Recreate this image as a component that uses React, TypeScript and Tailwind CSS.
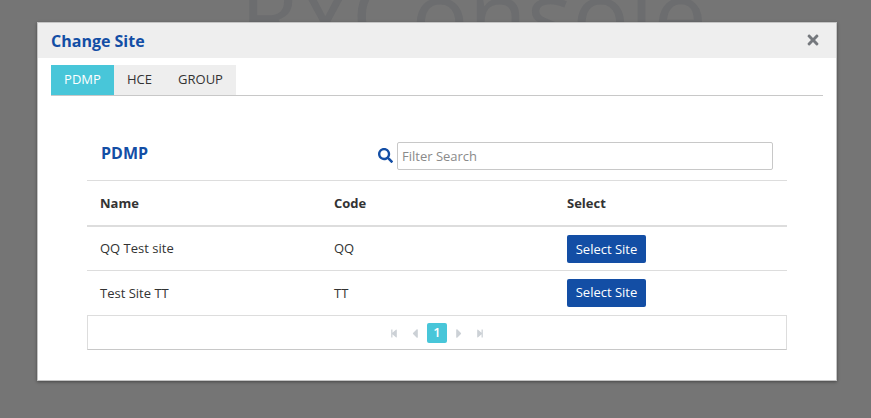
import { FaSearch, FaTimes, FaStepBackward, FaStepForward, FaCaretLeft, FaCaretRight } from "react-icons/fa"

const sites = [
    { name: "QQ Test site", code: "QQ" },
    { name: "Test Site TT", code: "TT" },
]

const SiteRow = (props: { name: string, code: string }) => {
    return (
        <tr className="h-[44px] border-b border-[#dddddd] last:h-[45px] last:border-b-0 [&:last-child>td]:pt-[2px] [&>td:last-child]:pt-[2px] [&:last-child>td:last-child]:pt-0">
            <td className="w-[234px] pl-[13px]">{props.name}</td>
            <td className="w-[233px] pl-[13px]">{props.code}</td>
            <td className="pl-[13px]">
                <button className="h-[28px] w-[79px] rounded-[2px] bg-[#134ea5] text-[13px] text-white">Select Site</button>
            </td>
        </tr>
    )
}

const App = () => {
    return (
        <div className="relative h-[418px] w-[871px] overflow-hidden bg-[#757575] font-['Open_Sans',sans-serif] text-[13px] text-[#333333]">
            <div className="whitespace-nowrap pl-[240px] text-[95px] font-normal leading-[26px] text-[#6c6d6f]">RYConsole</div>

            <div className="absolute left-[37px] top-[22px] h-[359px] w-[800px] border border-[#c4c4c4] bg-white shadow-[0_1px_3px_rgba(0,0,0,0.4)]">
                <div className="flex h-[35px] items-center justify-between bg-[#eeeeee] pl-[13px] pr-[17px]">
                    <h4 className="text-[16px] font-bold text-[#134ea5]">Change Site</h4>
                    <FaTimes className="mb-[2px] h-[16px] w-[12px] text-[#75787d]" />
                </div>

                <div className="mx-[13px] mt-[7px] flex h-[31px] border-b border-[#c8c8c8]">
                    <div className="flex h-[30px] w-[63px] items-center justify-center bg-[#48c6d9] text-white">PDMP</div>
                    <div className="flex h-[30px] w-[51px] items-center justify-center bg-[#eeeeee]">HCE</div>
                    <div className="flex h-[30px] w-[71px] items-center justify-center bg-[#eeeeee]">GROUP</div>
                </div>

                <div className="mx-[49px] mt-[46px]">
                    <div className="flex h-[39px] border-b border-[#dddddd]">
                        <h4 className="ml-[14px] w-[277px] pt-[1px] text-[16px] font-bold leading-[20px] text-[#134ea5]">PDMP</h4>
                        <FaSearch className="mt-[6px] h-[15px] w-[15px] text-[#134ea5]" />
                        <input
                            className="ml-[4px] h-[28px] w-[376px] rounded-[2px] border border-[#c8c8c8] px-[4px] text-[13px] outline-none placeholder:text-[#8a8a8a]"
                            placeholder="Filter Search"
                        />
                    </div>

                    <table className="w-full border-collapse">
                        <thead>
                            <tr className="h-[45px] border-b-2 border-[#dddddd] text-left font-bold">
                                <th className="pl-[13px] pt-[2px]">Name</th>
                                <th className="pl-[13px] pt-[2px]">Code</th>
                                <th className="pl-[13px] pt-[2px]">Select</th>
                            </tr>
                        </thead>
                        <tbody>
                            {sites.map((site) => (
                                <SiteRow key={site.code} name={site.name} code={site.code} />
                            ))}
                        </tbody>
                    </table>

                    <div className="flex h-[35px] items-center justify-center border border-[#dddddd] border-b-[#c8c8c8] text-[#ccd1d6]">
                        <FaStepBackward className="mt-[2px] h-[9px] w-[8px]" />
                        <FaCaretLeft className="ml-[14px] mt-[2px] h-[15px] w-[6px]" />
                        <div className="ml-[9px] flex h-[20px] w-[20px] items-center justify-center rounded-[2px] bg-[#48c6d9] text-[13px] font-semibold text-white">1</div>
                        <FaCaretRight className="ml-[9px] mt-[2px] h-[15px] w-[6px]" />
                        <FaStepForward className="ml-[14px] mt-[2px] h-[9px] w-[8px]" />
                    </div>
                </div>
            </div>
        </div>
    )
}

export default App
